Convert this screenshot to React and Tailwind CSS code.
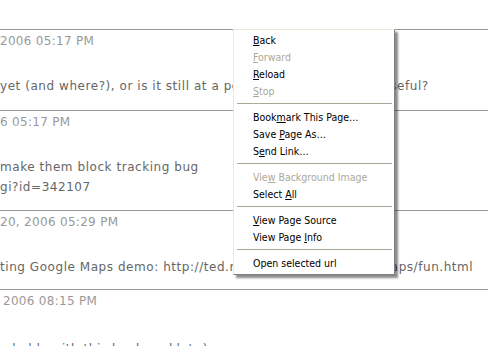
const page = '"DejaVu Sans", Verdana, sans-serif'
const menuFont = '"DejaVu Sans Condensed", "Liberation Sans", Tahoma, sans-serif'

const comments = [
  {
    date: '2006 05:17 PM',
    lines: ["yet (and where?), or is it still at a point where it isn't that useful?"],
    pb: 'pb-[14px]',
  },
  {
    date: '6 05:17 PM',
    lines: ['make them block tracking bug', 'gi?id=342107'],
    pb: 'pb-[13px]',
  },
  {
    date: '20, 2006 05:29 PM',
    lines: ['ting Google Maps demo: http://ted.mielczarek.org/code/.gmaps/fun.html'],
    pb: 'pb-[12px]',
  },
  {
    date: '2006 08:15 PM',
    lines: ['e holds with this bookmarklet :)'],
    pb: 'pb-[12px]',
    indent: 'pl-[3px]',
    gap: 'mt-[28px]',
  },
]

const items = [
  { label: 'Back', key: 0 },
  { label: 'Forward', key: 0, off: true },
  { label: 'Reload', key: 0 },
  { label: 'Stop', key: 0, off: true },
  'sep',
  { label: 'Bookmark This Page…', key: 4 },
  { label: 'Save Page As…', key: 5 },
  { label: 'Send Link…', key: 1 },
  'sep',
  { label: 'View Background Image', key: 3, off: true },
  { label: 'Select All', key: 7 },
  'sep',
  { label: 'View Page Source', key: 0 },
  { label: 'View Page Info', key: 10 },
  'sep',
  { label: 'Open selected url', key: -1 },
]

function Label({ label, k }) {
  if (k < 0) return label
  return (
    <>
      {label.slice(0, k)}
      <span className="underline underline-offset-[1px]">{label[k]}</span>
      {label.slice(k + 1)}
    </>
  )
}

function ContextMenu() {
  return (
    <div
      className="absolute z-10 left-[233px] top-[29px] w-[162px] bg-[#ffffff] border border-t-[#ece9d8] border-l-[#ece9d8] border-r-[#808080] border-b-[#808080] py-[2px] shadow-[3px_3px_2px_rgba(0,0,0,0.45)]"
      style={{ fontFamily: menuFont }}
    >
      {items.map((it, i) =>
        it === 'sep' ? (
          <div key={i} className="mt-[3px] mb-[5px] ml-[3px] mr-[2px] h-px bg-[#aca899]" />
        ) : (
          <div
            key={i}
            className={`h-[17px] leading-[17px] pl-[19px] text-[10.5px] whitespace-nowrap ${it.off ? 'text-[#aca899]' : 'text-black'}`}
          >
            <Label label={it.label} k={it.key} />
          </div>
        )
      )}
    </div>
  )
}

export default function App() {
  return (
    <div className="relative w-full h-[346px] overflow-hidden bg-white" style={{ fontFamily: page }}>
      <div className="pt-[29px]">
        {comments.map((c, i) => (
          <div key={i} className={`border-t border-[#999] pt-px ${c.pb} text-[12px] leading-[20px] whitespace-nowrap`}>
            <div className={`text-[#999] tracking-[0.3px] ${c.indent || ''}`}>{c.date}</div>
            <div className={`${c.gap || 'mt-[25px]'} text-[#666] tracking-[0.55px]`}>
              {c.lines.map((l, j) => (
                <div key={j}>{l}</div>
              ))}
            </div>
          </div>
        ))}
      </div>
      <ContextMenu />
    </div>
  )
}
